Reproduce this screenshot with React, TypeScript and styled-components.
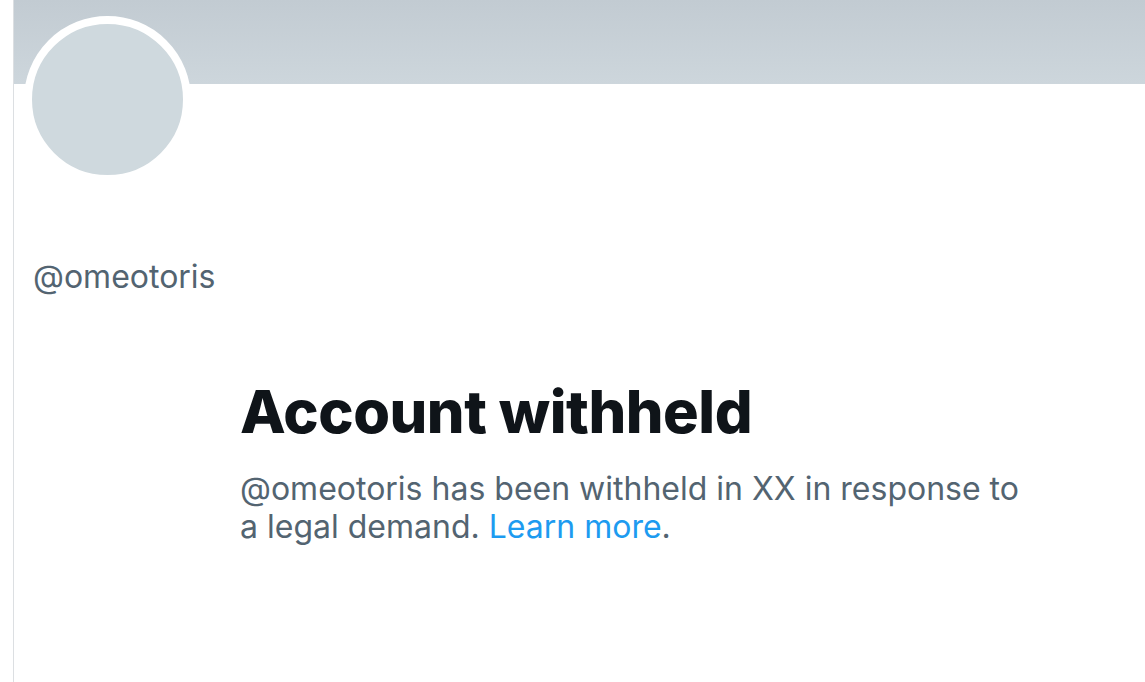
import styled, { createGlobalStyle } from "styled-components";

const GlobalStyle = createGlobalStyle`
  html, body {
    margin: 0;
    padding: 0;
    background: #ffffff;
  }
  body {
    font-family: Inter, "Noto Sans", "Liberation Sans", sans-serif;
  }
`;

const Page = styled.div`
  display: flex;
  min-height: 682px;
  padding-left: 13px;
  overflow: hidden;
`;

const Column = styled.main`
  flex: 1;
  border-left: 1px solid #dcdfe2;
  min-height: 682px;
`;

const Banner = styled.div`
  height: 84px;
  background: linear-gradient(180deg, #c2cbd2 0%, #cdd6dc 100%);
`;

const AvatarRing = styled.div`
  width: 151px;
  height: 151px;
  margin: -68px 0 0 10px;
  border: 8px solid #ffffff;
  border-radius: 50%;
  background: #cfd9de;
`;

const Handle = styled.div`
  margin: 75px 0 0 19px;
  font-size: 32px;
  line-height: 38px;
  color: #536471;
`;

const Notice = styled.section`
  margin: 79px 0 0 226px;
  max-width: 790px;
`;

const Title = styled.h1`
  margin: 0;
  font-size: 59.5px;
  line-height: 72px;
  font-weight: 800;
  letter-spacing: -0.5px;
  color: #0f1419;
`;

const Body = styled.p`
  margin: 23px 0 0;
  font-size: 32px;
  line-height: 38px;
  color: #536471;
`;

const Link = styled.a`
  color: #1d9bf0;
  text-decoration: none;
`;

export default function App() {
  return (
    <>
      <GlobalStyle />
      <Page>
        <Column>
          <Banner />
          <AvatarRing />
          <Handle>@omeotoris</Handle>
          <Notice>
            <Title>Account withheld</Title>
            <Body>
              @omeotoris has been withheld in XX in response to a legal demand.{" "}
              <Link href="#">Learn more</Link>.
            </Body>
          </Notice>
        </Column>
      </Page>
    </>
  );
}
